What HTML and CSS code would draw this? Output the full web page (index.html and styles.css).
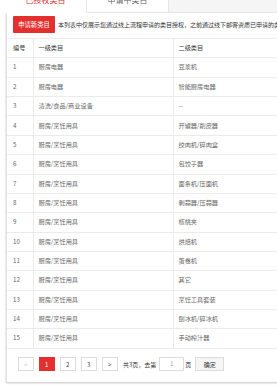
FILE: index.html
```html
<!DOCTYPE html>
<html lang="zh-CN">
<head>
<meta charset="utf-8">
<link rel="stylesheet" href="styles.css">
</head>
<body>
<div class="tabs">
  <div class="tab tab-active">已授权类目</div>
  <div class="tab">申请中类目</div>
  <div class="tab-fill"></div>
</div>
<div class="panel">
  <div class="notice">
    <button class="btn-apply">申请新类目</button>
    <span class="notice-text">本列表中仅展示您通过线上流程申请的类目授权，之前通过线下邮寄资质已申请的类目授权不在此处展示</span>
  </div>
  <table class="grid">
    <colgroup><col class="c1"><col class="c2"><col class="c3"></colgroup>
    <thead>
      <tr><th>编号</th><th>一级类目</th><th>二级类目</th></tr>
    </thead>
    <tbody>
      <tr><td>1</td><td>厨房电器</td><td>豆浆机</td></tr>
      <tr><td>2</td><td>厨房电器</td><td>智能厨房电器</td></tr>
      <tr><td>3</td><td>清洗/食品/商业设备</td><td>--</td></tr>
      <tr><td>4</td><td>厨房/烹饪用具</td><td>开罐器/削皮器</td></tr>
      <tr><td>5</td><td>厨房/烹饪用具</td><td>绞肉机/碎肉盒</td></tr>
      <tr><td>6</td><td>厨房/烹饪用具</td><td>包饺子器</td></tr>
      <tr><td>7</td><td>厨房/烹饪用具</td><td>面条机/压面机</td></tr>
      <tr><td>8</td><td>厨房/烹饪用具</td><td>剥蒜器/压蒜器</td></tr>
      <tr><td>9</td><td>厨房/烹饪用具</td><td>核桃夹</td></tr>
      <tr><td>10</td><td>厨房/烹饪用具</td><td>烘焙机</td></tr>
      <tr><td>11</td><td>厨房/烹饪用具</td><td>蛋卷机</td></tr>
      <tr><td>12</td><td>厨房/烹饪用具</td><td>其它</td></tr>
      <tr><td>13</td><td>厨房/烹饪用具</td><td>烹饪工具套装</td></tr>
      <tr><td>14</td><td>厨房/烹饪用具</td><td>刨冰机/碎冰机</td></tr>
      <tr><td>15</td><td>厨房/烹饪用具</td><td>手动榨汁器</td></tr>
    </tbody>
  </table>
  <div class="pager">
    <span class="pg pg-disabled">&lt;</span>
    <span class="pg pg-current">1</span>
    <span class="pg">2</span>
    <span class="pg">3</span>
    <span class="pg">&gt;</span>
    <span class="pg-text">共3页，去第</span>
    <span class="pg-input">1</span>
    <span class="pg-text">页</span>
    <span class="pg-ok">确定</span>
  </div>
</div>
</body>
</html>
```

FILE: styles.css
```css
html, body {
  margin: 0;
  padding: 0;
  overflow: hidden;
  background: #ffffff;
}
body {
  font-family: "Noto Sans CJK SC", "Noto Sans", sans-serif;
  font-size: 6.2px;
  color: #666;
  width: 277px;
  height: 385px;
}
.tabs {
  display: flex;
  height: 26px;
  margin-top: -13px;
  padding-left: 5px;
  width: 420px;
}
.tab {
  width: 82px;
  display: flex;
  align-items: center;
  justify-content: center;
  font-size: 8px;
  color: #666;
  background: #fff;
  border-right: 1px solid #e6e6e6;
  border-bottom: 1px solid #e6e6e6;
  box-sizing: border-box;
}
.tab-active {
  color: #e3302f;
  border-bottom-color: #fff;
}
.tab-fill {
  flex: 1;
  background: #f5f5f5;
  border-bottom: 1px solid #e6e6e6;
}
.panel {
  margin-left: 6px;
  width: 420px;
  border-left: 1px solid #e3e3e3;
  background: #fff;
  box-shadow: 0 1px 2px rgba(0,0,0,0.25);
  height: 369px;
  box-sizing: border-box;
}
.notice {
  display: flex;
  align-items: center;
  padding: 3px 6px 0;
  white-space: nowrap;
}
.btn-apply {
  width: 42px;
  height: 17px;
  border: 0;
  padding: 0;
  background: #e3302f;
  color: #fff;
  font-family: inherit;
  font-size: 6.3px;
  border-radius: 1px;
}
.notice-text {
  margin-left: 3px;
  color: #333;
  font-size: 6px;
}
.grid {
  margin-top: 5px;
  width: 100%;
  border-collapse: collapse;
  table-layout: fixed;
}
.c1 { width: 26px; }
.c2 { width: 140px; }
.grid th, .grid td {
  height: 19.37px;
  padding: 0 0 0 5px;
  text-align: left;
  font-weight: normal;
  border-top: 1px solid #ebebeb;
  border-bottom: 1px solid #ebebeb;
  box-sizing: border-box;
  line-height: 1;
}
.grid th { color: #333; }
.grid th + th, .grid td + td { border-left: 1px solid #ebebeb; }
.grid th:first-child, .grid td:first-child { padding-left: 6px; }
.pager {
  display: flex;
  align-items: center;
  padding: 8px 0 0 11px;
}
.pg {
  width: 15.5px;
  height: 14px;
  box-sizing: border-box;
  border: 1px solid #dcdcdc;
  display: flex;
  align-items: center;
  justify-content: center;
  color: #333;
  margin-right: 5.5px;
  background: #fff;
  font-size: 6px;
}
.pg-disabled { color: #ccc; }
.pg-current {
  background: #e3302f;
  border-color: #e3302f;
  color: #fff;
}
.pg-text {
  color: #333;
  font-size: 6px;
}
.pg-input {
  width: 25px;
  height: 14.5px;
  box-sizing: border-box;
  border: 1px solid #dcdcdc;
  margin: 0 1px 0 3px;
  display: flex;
  align-items: center;
  justify-content: center;
  color: #999;
  font-size: 5.5px;
}
.pg-ok {
  margin-left: 4px;
  width: 28.6px;
  height: 14px;
  box-sizing: border-box;
  border: 1px solid #dcdcdc;
  background: #f5f5f5;
  display: flex;
  align-items: center;
  justify-content: center;
  color: #333;
  font-size: 6px;
}
```
